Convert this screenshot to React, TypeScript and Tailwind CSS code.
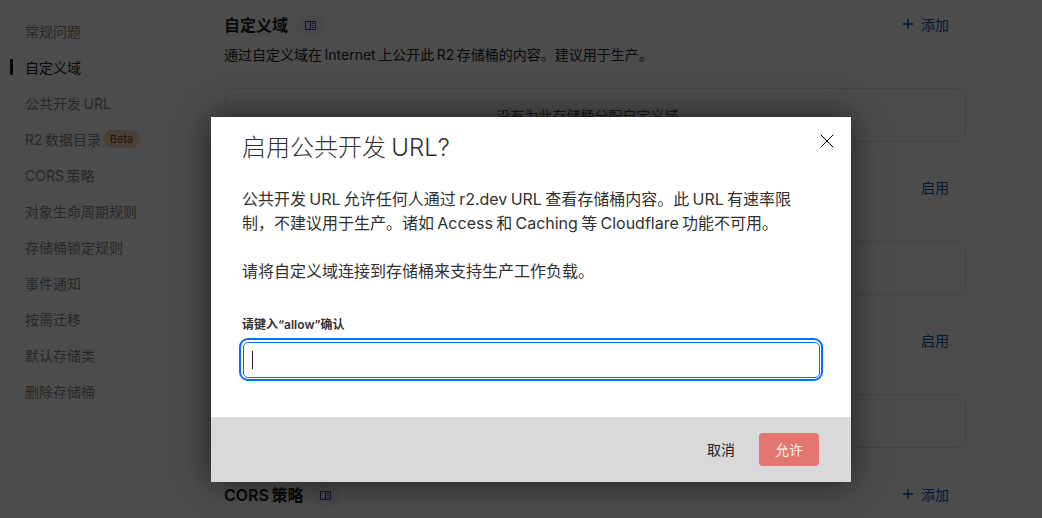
import { Plus, X } from "lucide-react";

const navItems = [
  "常规问题",
  "自定义域",
  "公共开发 URL",
  "R2 数据目录",
  "CORS 策略",
  "对象生命周期规则",
  "存储桶锁定规则",
  "事件通知",
  "按需迁移",
  "默认存储类",
  "删除存储桶",
];

const FONT = "font-['Inter','Noto_Sans_CJK_SC',sans-serif]";

function DocBadge() {
  return (
    <span className="flex h-5 w-7 items-center justify-center rounded-full bg-[#f2f0f8]">
      <svg width="11" height="11" viewBox="0 0 11 11" fill="none" stroke="#4a3fb0" strokeWidth="1">
        <rect x="0.5" y="1.5" width="10" height="8" />
        <path d="M5.5 1.5v8M7 3.5h2M7 5.5h2M7 7.5h2" />
      </svg>
    </span>
  );
}

function SectionHeader({
  title,
  action,
  actionOffset,
}: {
  title: string;
  action: string;
  actionOffset?: boolean;
}) {
  return (
    <div className="flex h-[26px] items-center justify-between">
      <div className="-ml-px flex items-center gap-[8px]">
        <h2 className="text-[16px] font-semibold text-[#1a1a1a]">{title}</h2>
        <DocBadge />
      </div>
      {actionOffset ? (
        <span className="mt-[18px] pr-[17px] text-[14px] text-[#0051c3]">{action}</span>
      ) : (
        <span className="-mt-[2px] flex items-center gap-[5px] pr-[17px] text-[14px] text-[#0051c3]">
          <Plus size={16} />
          {action}
        </span>
      )}
    </div>
  );
}

function Section({
  title,
  desc,
  action,
  empty,
  actionOffset,
}: {
  title: string;
  desc: string;
  action: string;
  empty: string;
  actionOffset?: boolean;
}) {
  return (
    <section className="h-[153px] shrink-0">
      <SectionHeader title={title} action={action} actionOffset={actionOffset} />
      <p className="-ml-px mt-[6px] text-[14px] leading-[22px] text-[#222]">{desc}</p>
      <div className="mt-[22px] flex h-[54px] items-center justify-center rounded-[10px] border border-[#e5e5e5] pr-[16px] text-[14px] text-[#555]">
        {empty}
      </div>
    </section>
  );
}

export default function App() {
  return (
    <div className={`relative h-[518px] w-[1042px] overflow-hidden bg-white [word-spacing:-1.4px] ${FONT}`}>
      <div className="flex">
        <nav className="w-[225px] shrink-0 pt-[13px]">
          {navItems.map((item, i) => (
            <div
              key={item}
              className={`relative flex h-[36px] items-center pl-[25px] text-[14px] ${
                i === 1 ? "text-[#222]" : "text-[#888]"
              }`}
            >
              {i === 1 && (
                <span className="absolute left-[10px] top-[10px] h-[16px] w-[3px] rounded-[1px] bg-[#111]" />
              )}
              {item}
              {i === 3 && (
                <span className="ml-[2px] flex h-[18px] w-[37px] items-center justify-center rounded-full bg-[#f5d5bd] text-[11px] text-[#7a3e10]">
                  Beta
                </span>
              )}
            </div>
          ))}
        </nav>
        <main className="w-[741px] pt-[12px]">
          <Section
            title="自定义域"
            desc="通过自定义域在 Internet 上公开此 R2 存储桶的内容。建议用于生产。"
            action="添加"
            empty="没有为此存储桶分配自定义域"
          />
          <Section
            title="公共开发 URL"
            desc="通过公共开发 URL 公开此存储桶的内容。"
            action="启用"
            empty="已禁用"
            actionOffset
          />
          <Section
            title="R2 数据目录"
            desc="使用 Apache Iceberg 管理存储桶中的表。"
            action="启用"
            empty="已禁用"
            actionOffset
          />
          <div className="mt-[11px]">
            <SectionHeader title="CORS 策略" action="添加" />
          </div>
        </main>
      </div>

      <div className="absolute inset-0 bg-black/70 pl-[211px] pt-[117px]">
        <div className="w-[640px] bg-white shadow-[0_0_30px_rgba(0,0,0,0.6)]">
          <div className="relative h-[300px] pl-[31px] pr-[31px]">
            <X
              size={24}
              strokeWidth={1}
              className="absolute right-[12px] top-[12px] text-black"
            />
            <h1 className="pt-[15px] text-[24px] font-light leading-[32px] text-[#313131]">
              启用公共开发 URL?
            </h1>
            <p className="mt-[23px] w-[560px] text-[16px] leading-[24px] text-[#313131] [word-spacing:-1.2px]">
              公共开发 URL 允许任何人通过 r2.dev URL 查看存储桶内容。此 URL 有速率限制{"\uFF0C"}不建议用于生产。诸如 Access 和 Caching 等 Cloudflare 功能不可用。
            </p>
            <p className="mt-[24px] text-[16px] leading-[24px] text-[#313131]">
              请将自定义域连接到存储桶来支持生产工作负载。
            </p>
            <label className="mt-[33px] block text-[12px] font-semibold leading-[18px] text-[#313131]">
              请键入“allow”确认
            </label>
            <div className="-ml-[3px] mt-[4px] flex h-[43px] w-[584px] items-center rounded-[9px] border-[2.5px] border-[#0a6cff] p-[1.5px]">
              <div className="flex h-full w-full items-center rounded-[5px] border border-[#0a6cff] pl-[8px]">
                <span className="h-[18px] w-px bg-[#222]" />
              </div>
            </div>
          </div>
          <div className="flex h-[65px] items-center justify-end gap-[24px] bg-[#d9d9d9] pr-[32px]">
            <span className="text-[14px] text-[#222]">取消</span>
            <button className="h-[33px] w-[60px] rounded-[4px] bg-[#e37670] text-[14px] text-white/90">
              允许
            </button>
          </div>
        </div>
      </div>
    </div>
  );
}
